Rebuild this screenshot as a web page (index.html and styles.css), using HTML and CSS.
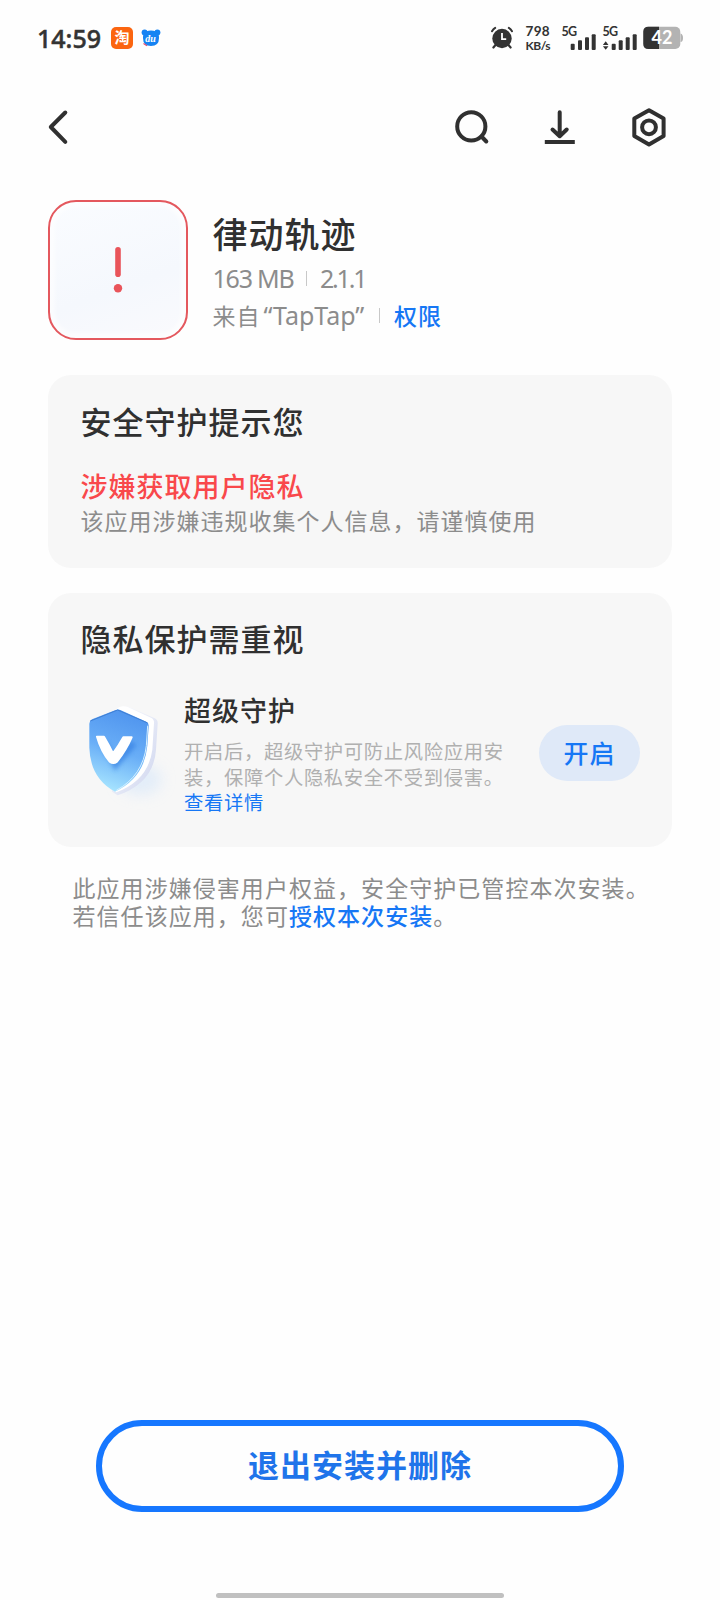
FILE: index.html
```html
<!DOCTYPE html>
<html lang="zh-CN">
<head>
<meta charset="utf-8">
<title>安全守护</title>
<link rel="stylesheet" href="styles.css">
</head>
<body>
<div class="screen">
  <header class="status">
    <span class="clock">14:59</span>
    <span class="tao">淘</span>
    <svg class="bear" width="20" height="18" viewBox="0 0 20 18">
      <circle cx="3.6" cy="3.6" r="3" fill="#1583f3"/><circle cx="16.4" cy="3.6" r="3" fill="#1583f3"/>
      <path d="M5 2.500Q10 .6 15 2.500Q18.300 4.500 18 9Q18 17 10 17Q2 17 2 9Q1.700 4.500 5 2.500Z" fill="#1583f3"/>
      <path d="M2.500 14.500L6 16.800" stroke="#e5486a" stroke-width="1.200"/>
      <text x="4.300" y="13" class="du">du</text>
    </svg>
    <svg class="indicators" width="200" height="36" viewBox="0 0 200 36">
      <g fill="none" stroke="#333" stroke-linecap="round">
        <path d="M2 11.200Q3.300 9 5.200 7.900M18.800 7.900Q20.700 9 22 11.200" stroke-width="2"/>
        <path d="M5.500 25L3.400 27.500M18.500 25L20.600 27.500" stroke-width="2.200"/>
      </g>
      <circle cx="12" cy="18.500" r="9.700" fill="#333"/>
      <path d="M12 13V19.200H16.200" fill="none" stroke="#fff" stroke-width="1.800"/>
      <text x="35.600" y="15.600" class="rate" textLength="24">798</text>
      <text x="35.600" y="30" class="unit" textLength="25">KB/s</text>
      <text x="71.500" y="16.300" class="net" textLength="15.500">5G</text>
      <text x="112.500" y="16.300" class="net" textLength="15.500">5G</text>
      <g fill="#333">
        <rect x="80.700" y="23.700" width="4" height="6.300" rx="1"/><rect x="88" y="20.300" width="4" height="9.700" rx="1"/><rect x="95" y="17.300" width="4" height="12.700" rx="1"/><rect x="101.700" y="14.300" width="4" height="15.700" rx="1"/>
        <rect x="121.700" y="23.700" width="4" height="6.300" rx="1"/><rect x="128.700" y="20.300" width="4" height="9.700" rx="1"/><rect x="135.700" y="17.300" width="4" height="12.700" rx="1"/><rect x="142.700" y="14.300" width="4" height="15.700" rx="1"/>
        <path d="M115.700 21.300L118.500 25H112.900ZM115.700 29.700L118.500 26.300H112.900Z"/>
      </g>
      <rect x="153.300" y="6.700" width="37" height="22.300" rx="5" fill="#b3b3b3"/>
      <path d="M190.500 13.500Q193 14 193 18T190.500 22Z" fill="#b3b3b3"/>
      <path d="M169 6.700H158.300Q153.300 6.700 153.300 11.700V24Q153.300 29 158.300 29H169Z" fill="#333"/>
      <text x="161.500" y="24.300" class="level" textLength="21">42</text>
    </svg>
  </header>

  <nav class="toolbar">
    <svg class="back" width="44" height="44" viewBox="0 0 44 44"><path d="M29.300 7.500L14.800 22L29.300 36.800"/></svg>
    <svg width="44" height="44" viewBox="0 0 44 44"><circle cx="22.300" cy="21.400" r="14.100"/><path d="M32.500 31.500L37.300 36.500"/></svg>
    <svg width="44" height="44" viewBox="0 0 44 44"><path d="M21.700 7.200V30M14.500 24.500L21.700 31.200L28.700 24.500"/><path class="square" d="M6.800 37H36.800"/></svg>
    <svg width="44" height="44" viewBox="0 0 44 44"><path d="M22 5.300L36.600 13.500V31L22 39.500L7.300 31V13.500Z"/><circle cx="22" cy="22.300" r="6.900"/></svg>
  </nav>

  <section class="app">
    <div class="app-icon">
      <svg width="12" height="48" viewBox="0 0 12 48"><rect x="3.200" y="1" width="5.600" height="30" rx="2.800" fill="#e9545a"/><circle cx="6" cy="42.300" r="4.200" fill="#e9545a"/></svg>
    </div>
    <div class="app-info">
      <h1>律动轨迹</h1>
      <p class="meta"><span class="size">163 MB</span><i class="bar"></i><span class="version">2.1.1</span></p>
      <p class="meta from"><span class="cjk">来自</span><span class="source">“TapTap”</span><i class="bar"></i><a class="perm">权限</a></p>
    </div>
  </section>

  <section class="card warning">
    <h2>安全守护提示您</h2>
    <h3 class="risk">涉嫌获取用户隐私</h3>
    <p class="detail">该应用涉嫌违规收集个人信息，请谨慎使用</p>
  </section>

  <section class="card privacy">
    <h2>隐私保护需重视</h2>
    <div class="feature">
      <svg class="shield" width="87" height="110" viewBox="140 340 261 330">
        <defs>
          <linearGradient id="face" x1=".6" y1="0" x2=".35" y2="1"><stop offset="0" stop-color="#4f94ee"/><stop offset=".5" stop-color="#69aef7"/><stop offset="1" stop-color="#a9e6ff"/></linearGradient>
          <linearGradient id="side" x1="0" y1="0" x2="1" y2="1"><stop offset="0" stop-color="#fff"/><stop offset="1" stop-color="#cdd4ee"/></linearGradient>
          <filter id="soft" x="-50%" y="-50%" width="200%" height="200%"><feGaussianBlur stdDeviation="20"/></filter>
          <filter id="near" x="-50%" y="-50%" width="200%" height="200%"><feGaussianBlur stdDeviation="6"/></filter>
        </defs>
        <ellipse cx="300" cy="570" rx="64" ry="46" fill="#cfe3fa" opacity=".5" filter="url(#soft)"/>
        <path d="M244 352Q258 346 272 354L343 386Q353 391 352 402L347 480Q340 580 232 617L215 606Z" fill="url(#side)"/>
        <path d="M226 360Q240 346 260 351L332 384Q342 389 341 400L336 480Q324 572 228 608L215 600Z" fill="#fff"/>
        <path d="M226 361Q233 358 240 361L318 396Q326 400 325 410L321 468Q312 565 224 606Q150 566 147 474L147 402Q148 392 155 389Z" fill="url(#face)"/>
        <path d="M150 394L232 361L322 400" fill="none" stroke="#3f7fd4" stroke-width="3"/>
        <path d="M322 408L318 468Q308 558 228 602" fill="none" stroke="#d4efff" stroke-width="3"/>
        <path d="M184 454L218 516L272 452" transform="translate(8 8)" fill="none" stroke="#2d79df" opacity=".6" stroke-width="22" filter="url(#near)"/>
        <path d="M170 441H191Q206 466 218 491Q236 467 249 443H274Q257 482 230 516Q219 524 208 516Q182 484 170 441Z" fill="#fff" stroke="#fff" stroke-width="6" stroke-linejoin="round"/>
      </svg>
      <div class="feature-text">
        <h3>超级守护</h3>
        <p>开启后，超级守护可防止风险应用安<br>装，保障个人隐私安全不受到侵害。<br><a>查看详情</a></p>
      </div>
      <button class="enable">开启</button>
    </div>
  </section>

  <p class="note">此应用涉嫌侵害用户权益，安全守护已管控本次安装。<br>若信任该应用，您可<a>授权本次安装</a>。</p>

  <footer class="bottom">
    <button class="exit">退出安装并删除</button>
    <div class="home"></div>
  </footer>
</div>
</body>
</html>
```
FILE: styles.css
```css
* { box-sizing: border-box; margin: 0; padding: 0; }
body { background: #fefefe; }
.screen {
  width: 720px; height: 1600px; overflow: hidden;
  display: flex; flex-direction: column;
  color: #303030;
  font-family: "Noto Sans CJK SC", sans-serif;
}
h1, h2, h3 { font-weight: 500; }
a { color: #1677f5; font-weight: 500; }
button { font-family: inherit; border: 0; }
svg { display: block; flex: none; }

.status { height: 76px; padding: 0 30px 0 37px; display: flex; align-items: center; }
.clock { font: 500 25px/30px "Noto Sans", sans-serif; color: #333; width: 74px; white-space: nowrap; -webkit-text-stroke: .5px #333; }
.tao {
  width: 22px; height: 22px; border-radius: 5px; background: #fb6510; color: #fff;
  font-size: 15px; line-height: 20px; font-weight: 700; text-align: center;
}
.bear { margin-left: 8px; }
.du { font: italic 700 10px "Liberation Serif", serif; fill: #fff; }
.indicators { margin-left: auto; overflow: visible; }
.indicators text { fill: #333; font-family: Lato, sans-serif; font-weight: 700; }
.indicators .rate { font-size: 13.5px; }
.indicators .unit { font-size: 12px; }
.indicators .net { font-size: 12.5px; }
.indicators .level { font-size: 18px; fill: #fff; }

.toolbar { height: 102px; padding: 0 49px 0 35.500px; display: flex; align-items: center; gap: 45px; }
.toolbar svg { fill: none; stroke: #303030; stroke-width: 4; stroke-linecap: round; stroke-linejoin: round; }
.toolbar .square { stroke-linecap: butt; }
.toolbar .back { margin-right: auto; }

.app { margin: 22px 48px 0; height: 140px; display: flex; gap: 24.500px; }
.app-icon {
  width: 140px; height: 140px; border: 2px solid #e4585e; border-radius: 28px;
  background: linear-gradient(160deg, #fafcff, #f5f8fd 60%, #fafafd);
  box-shadow: inset 0 0 4px 5px rgba(255, 255, 255, .6);
  display: flex; align-items: center; justify-content: center;
}
.app-info { padding-top: 10px; }
.app-info h1 { font-size: 35px; letter-spacing: 1px; line-height: 46px; }
.meta { display: flex; align-items: center; height: 36px; margin-top: 4px; color: #8c8c8c; font: 400 25px/36px "Noto Sans", sans-serif; }
.from { margin-top: 1px; }
.size { width: 93px; white-space: nowrap; letter-spacing: -1.200px; }
.bar { width: 1.500px; height: 15px; background: #c8c8c8; }
.version { margin-left: 13px; letter-spacing: -2.200px; }
.cjk, .perm { font: 400 23px/36px "Noto Sans CJK SC", sans-serif; letter-spacing: 1px; }
.perm { font-weight: 500; margin-left: 14px; }
.source { width: 118px; padding-left: 3px; white-space: nowrap; }

.card { margin: 0 48px; padding: 24px 32px 0 32.500px; border-radius: 23px; background: #f7f7f7; }
.card h2 { font-size: 31px; letter-spacing: 1px; line-height: 44px; }
.warning { margin-top: 35px; height: 193px; }
.risk { margin-top: 25px; font-size: 27px; letter-spacing: 1px; line-height: 36px; color: #f9484b; }
.detail { margin-top: -1px; font-size: 23px; letter-spacing: 1px; line-height: 34px; color: #8c8c8c; }
.privacy { margin-top: 25px; padding-top: 23px; height: 254px; }
.feature { display: flex; margin-top: 32px; }
.shield { margin: 11px 10px 0 6.500px; overflow: visible; }
.feature-text { flex: 1; white-space: nowrap; }
.feature-text h3 { font-size: 27px; letter-spacing: 1px; line-height: 36px; }
.feature-text p { margin-top: 11px; font-size: 19.300px; letter-spacing: .7px; line-height: 25.700px; color: #b0b0b0; }
.feature-text a { font-weight: 400; }
.enable {
  width: 101px; height: 56px; margin-top: 33px; border-radius: 28px; background: #dfe9f8;
  color: #1677f5; font-size: 25px; font-weight: 500; letter-spacing: 1px; line-height: 54px; padding-bottom: 2px;
}

.note { margin: 26px 0 0 72.500px; font-size: 23px; letter-spacing: 1.050px; line-height: 28px; color: #8c8c8c; white-space: nowrap; }

.bottom { margin-top: auto; height: 180px; display: flex; flex-direction: column; align-items: center; }
.exit {
  width: 528px; height: 92px; border: 6px solid #1677ff; border-radius: 46px; background: #fefefe;
  color: #1f74ea; font-size: 31px; font-weight: 700; letter-spacing: 1px; line-height: 76px; padding-bottom: 4px;
}
.home { width: 288px; height: 5px; margin-top: 80.500px; border-radius: 3px; background: #c0c0c0; }
```
